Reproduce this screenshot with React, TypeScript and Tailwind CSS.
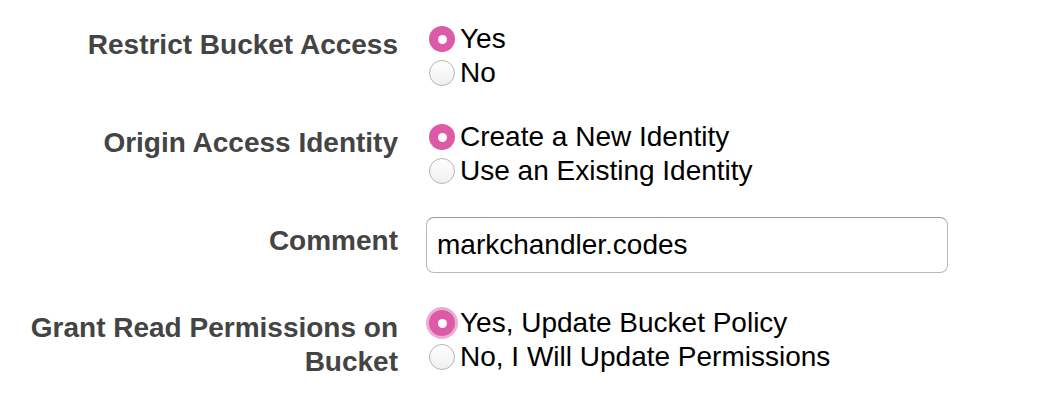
const font = { fontFamily: '"Liberation Sans", Arial, Helvetica, sans-serif' };

function Radio({ label, checked, focused }: { label: string; checked?: boolean; focused?: boolean }) {
  return (
    <div className="flex h-[34px] items-center">
      <span
        className={`mr-[5px] flex h-[26px] w-[26px] shrink-0 items-center justify-center rounded-full ${
          checked
            ? 'bg-[#dc5aa8]' + (focused ? ' ring-[3px] ring-[#eab0d2]' : '')
            : 'border border-[#b5b5b5] bg-gradient-to-b from-white to-[#f0f0f0]'
        }`}
      >
        {checked && <span className="h-[9px] w-[9px] rounded-full bg-white" />}
      </span>
      <span className="text-[28px] leading-[34px] text-black">{label}</span>
    </div>
  );
}

function Row({ label, children, labelOffset = 'pt-[6px]' }: { label: React.ReactNode; children: React.ReactNode; labelOffset?: string }) {
  return (
    <div className="flex">
      <div className={`w-[398px] shrink-0 text-right text-[28px] font-bold leading-[34px] text-[#444] ${labelOffset}`}>
        {label}
      </div>
      <div className="ml-[31px]">{children}</div>
    </div>
  );
}

export default function App() {
  return (
    <div className="h-[410px] w-[1056px] bg-white pt-[22px]" style={font}>
      <Row label="Restrict Bucket Access">
        <Radio label="Yes" checked />
        <Radio label="No" />
      </Row>
      <div className="h-[30px]" />
      <Row label="Origin Access Identity">
        <Radio label="Create a New Identity" checked />
        <Radio label="Use an Existing Identity" />
      </Row>
      <div className="h-[29px]" />
      <Row label="Comment" labelOffset="pt-[7px]">
        <input
          defaultValue="markchandler.codes"
          className="-ml-[3px] h-[56px] w-[522px] rounded-[8px] border border-[#b8b8b8] border-t-[#9a9a9a] px-[10px] text-[28px] text-black outline-none"
          style={font}
        />
      </Row>
      <div className="h-[33px]" />
      <Row label={<>Grant Read Permissions on<br />Bucket</>} labelOffset="pt-[5px]">
        <Radio label="Yes, Update Bucket Policy" checked focused />
        <Radio label="No, I Will Update Permissions" />
      </Row>
    </div>
  );
}
